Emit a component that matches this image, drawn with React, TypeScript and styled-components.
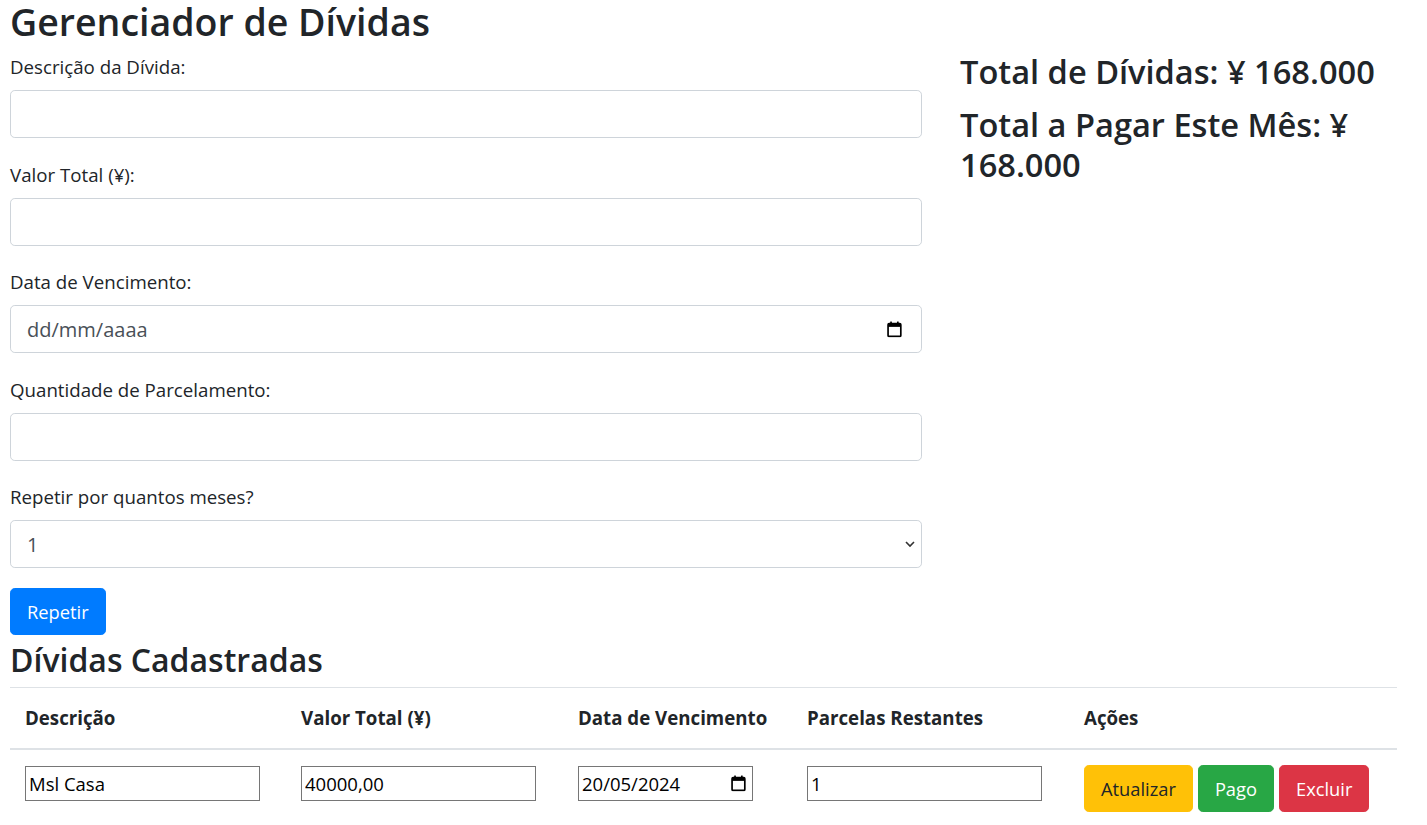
import React from 'react';
import styled, { createGlobalStyle } from 'styled-components';

const GlobalStyle = createGlobalStyle`
  * {
    box-sizing: border-box;
  }
  body {
    margin: 0;
    font-family: "Open Sans", "Noto Sans", sans-serif;
    font-size: 18.7px;
    line-height: 1.5;
    color: #212529;
    background: #fff;
  }
`;

const Page = styled.div`
  padding: 0 30px 0 10px;
`;

const Title = styled.h1`
  margin: -2px 0 9px;
  font-size: 37.5px;
  font-weight: 600;
  line-height: 48px;
`;

const TopRow = styled.div`
  display: grid;
  grid-template-columns: 912px 1fr;
  column-gap: 38px;
`;

const Form = styled.form`
  display: flex;
  flex-direction: column;
`;

const Group = styled.div<{ $last?: boolean }>`
  margin-bottom: ${(p) => (p.$last ? '20px' : '24.5px')};
`;

const Label = styled.label`
  display: block;
  margin-bottom: 11px;
  line-height: 24px;
`;

const FieldWrap = styled.div`
  position: relative;
`;

const Control = styled.input`
  display: block;
  width: 100%;
  height: 48px;
  padding: 8px 16px;
  font-family: inherit;
  font-size: 20px;
  color: #495057;
  background: #fff;
  border: 1px solid #ced4da;
  border-radius: 4.8px;
  outline: none;

  &::placeholder {
    color: #495057;
  }
`;

const SelectControl = styled.select`
  display: block;
  width: 100%;
  height: 48px;
  padding: 8px 16px;
  font-family: inherit;
  font-size: 20px;
  color: #495057;
  background: #fff;
  border: 1px solid #ced4da;
  border-radius: 4.8px;
  appearance: none;
  outline: none;
`;

const FieldIcon = styled.span<{ $right: number }>`
  position: absolute;
  top: 50%;
  right: ${(p) => p.$right}px;
  transform: translateY(-50%);
  display: flex;
  pointer-events: none;
`;

const Button = styled.button<{ $bg: string; $fg?: string }>`
  display: inline-block;
  height: 47px;
  padding: 0 16px;
  font-family: inherit;
  font-size: 18.3px;
  line-height: 30px;
  color: ${(p) => p.$fg || '#fff'};
  background: ${(p) => p.$bg};
  border: 1px solid ${(p) => p.$bg};
  border-radius: 4.8px;
  cursor: pointer;
`;

const RepeatButton = styled(Button)`
  align-self: flex-start;
  margin-bottom: 5px;
`;

const Summary = styled.div`
  margin-top: -3px;
`;

const Total = styled.h2`
  margin: 0 0 13px;
  font-size: 32.6px;
  font-weight: 600;
  line-height: 40px;
`;

const SectionTitle = styled.h2`
  margin: 0 0 7px;
  font-size: 32px;
  font-weight: 600;
  line-height: 40px;
`;

const Table = styled.table`
  width: 100%;
  border-collapse: collapse;
  table-layout: fixed;
`;

const Th = styled.th<{ $w?: number }>`
  width: ${(p) => (p.$w ? `${p.$w}px` : 'auto')};
  padding: 18px 15px;
  text-align: left;
  font-weight: 700;
  line-height: 24px;
  border-top: 1px solid #dee2e6;
  border-bottom: 2px solid #dee2e6;
`;

const Td = styled.td`
  padding: 15px;
  vertical-align: top;
  border-top: 1px solid #dee2e6;
`;

const CellInput = styled.input<{ $w: number }>`
  width: ${(p) => p.$w}px;
  height: 35px;
  margin-top: 1px;
  padding: 1px 3px;
  font-family: inherit;
  font-size: 18.5px;
  color: #000;
  border: 1px solid #767676;
  border-radius: 0;
  background: #fff;
  outline: none;
`;

const Actions = styled.div`
  display: flex;
  gap: 5px;
`;

const CalendarIcon = ({ size = 16 }: { size?: number }) => (
  <svg width={size * 0.875} height={size} viewBox="0 0 14 16" fill="none">
    <rect x="1" y="3" width="12" height="12" rx="1" stroke="#000" strokeWidth="1.6" />
    <rect x="1" y="3" width="12" height="3" fill="#000" />
    <rect x="3" y="1" width="1.6" height="3" fill="#000" />
    <rect x="9.4" y="1" width="1.6" height="3" fill="#000" />
  </svg>
);

const Chevron = () => (
  <svg width="10" height="7" viewBox="0 0 10 7" fill="none">
    <path d="M1 1.5 L5 5.5 L9 1.5" stroke="#333" strokeWidth="1.6" />
  </svg>
);

const fields = [
  { label: 'Descrição da Dívida:', type: 'text' },
  { label: 'Valor Total (¥):', type: 'text' },
];

const App = () => {
  return (
    <Page>
      <GlobalStyle />
      <Title>Gerenciador de Dívidas</Title>
      <TopRow>
        <Form onSubmit={(e) => e.preventDefault()}>
          {fields.map((f) => (
            <Group key={f.label}>
              <Label>{f.label}</Label>
              <Control type={f.type} />
            </Group>
          ))}
          <Group>
            <Label>Data de Vencimento:</Label>
            <FieldWrap>
              <Control type="text" placeholder="dd/mm/aaaa" />
              <FieldIcon $right={20}>
                <CalendarIcon size={17} />
              </FieldIcon>
            </FieldWrap>
          </Group>
          <Group>
            <Label>Quantidade de Parcelamento:</Label>
            <Control type="text" />
          </Group>
          <Group $last>
            <Label>Repetir por quantos meses?</Label>
            <FieldWrap>
              <SelectControl defaultValue="1">
                {Array.from({ length: 12 }, (_, i) => (
                  <option key={i} value={String(i + 1)}>
                    {i + 1}
                  </option>
                ))}
              </SelectControl>
              <FieldIcon $right={7}>
                <Chevron />
              </FieldIcon>
            </FieldWrap>
          </Group>
          <RepeatButton type="button" $bg="#007bff">
            Repetir
          </RepeatButton>
        </Form>
        <Summary>
          <Total>Total de Dívidas: ¥ 168.000</Total>
          <Total>Total a Pagar Este Mês: ¥ 168.000</Total>
        </Summary>
      </TopRow>
      <SectionTitle>Dívidas Cadastradas</SectionTitle>
      <Table>
        <thead>
          <tr>
            <Th $w={276}>Descrição</Th>
            <Th $w={277}>Valor Total (¥)</Th>
            <Th $w={229}>Data de Vencimento</Th>
            <Th $w={277}>Parcelas Restantes</Th>
            <Th>Ações</Th>
          </tr>
        </thead>
        <tbody>
          <tr>
            <Td>
              <CellInput $w={235} defaultValue="Msl Casa" />
            </Td>
            <Td>
              <CellInput $w={235} defaultValue="40000,00" />
            </Td>
            <Td>
              <FieldWrap>
                <CellInput $w={175} defaultValue="20/05/2024" />
                <FieldIcon $right={31}>
                  <CalendarIcon size={17} />
                </FieldIcon>
              </FieldWrap>
            </Td>
            <Td>
              <CellInput $w={235} defaultValue="1" />
            </Td>
            <Td>
              <Actions>
                <Button type="button" $bg="#ffc107" $fg="#212529">
                  Atualizar
                </Button>
                <Button type="button" $bg="#28a745">
                  Pago
                </Button>
                <Button type="button" $bg="#dc3545">
                  Excluir
                </Button>
              </Actions>
            </Td>
          </tr>
        </tbody>
      </Table>
    </Page>
  );
};

export default App;
